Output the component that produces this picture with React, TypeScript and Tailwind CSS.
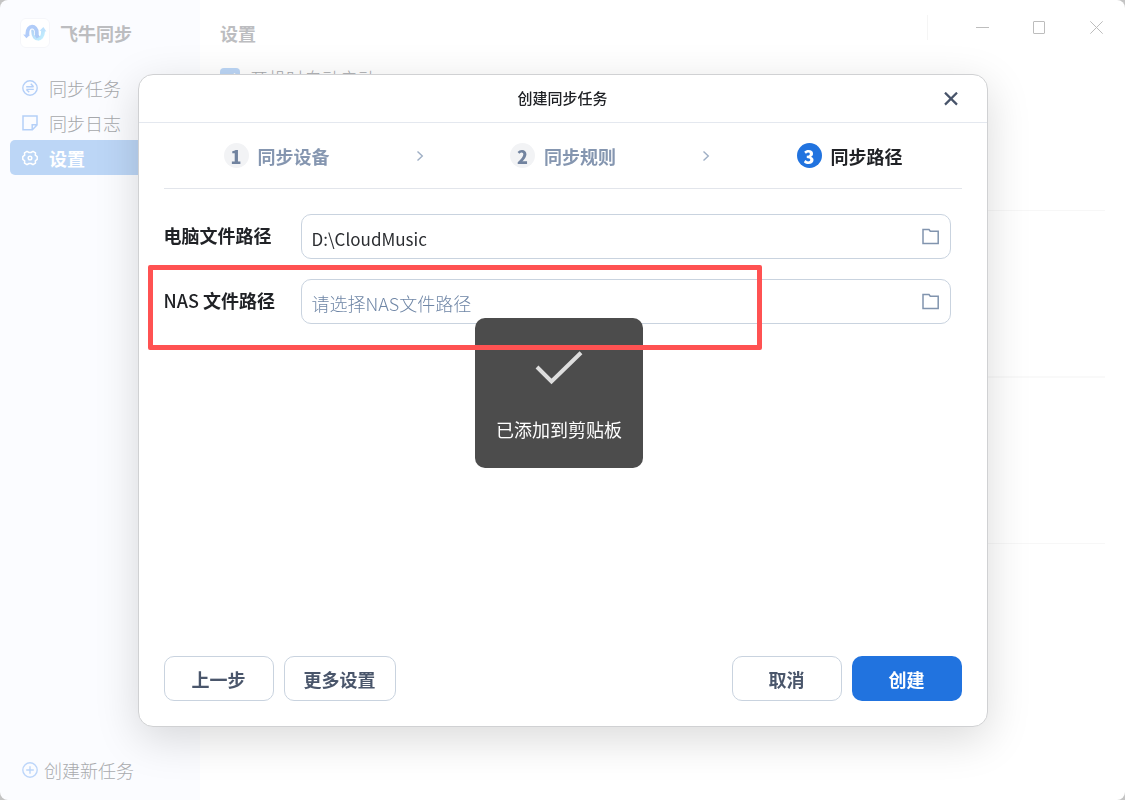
import React from "react";

interface NavItem {
  title: string;
  icon: React.ReactNode;
  active?: boolean;
}

interface Step {
  title: string;
  active?: boolean;
}

const Logo = () => (
  <svg className="h-[30px] w-[30px]" viewBox="0 0 30 30" fill="none">
    <defs>
      <linearGradient id="logo-arch" x1="4" y1="8" x2="19" y2="18" gradientUnits="userSpaceOnUse">
        <stop stopColor="#b3cdfb" />
        <stop offset="1" stopColor="#aecbf5" />
      </linearGradient>
      <linearGradient id="logo-bowl" x1="12" y1="12" x2="22" y2="22" gradientUnits="userSpaceOnUse">
        <stop stopColor="#b4d3f6" />
        <stop offset="1" stopColor="#c2f0ff" />
      </linearGradient>
    </defs>
    <rect x="0.5" y="0.5" width="29" height="29" rx="5.5" fill="#fff" stroke="#f5f6fa" />
    <path d="M13.2 11.5v2.3c0 9.2 9.6 9.2 9.8.2v-1.5" stroke="url(#logo-bowl)" strokeWidth="3.8" />
    <path d="M19.6 12.8 23.4 9l3 4.4z" fill="#bfe2fd" />
    <path d="M7.4 17v-1.4c0-9.2 9.4-8.8 9.4-1v2.6" stroke="#fff" strokeWidth="5.2" />
    <path d="M7.4 17v-1.4c0-9.2 9.4-8.8 9.4-1v2.6l1.4 2.4" stroke="url(#logo-arch)" strokeWidth="3.8" />
    <path d="m3.2 16.4 6.8.6-3.6 3.2z" fill="#b3cdfb" />
  </svg>
);

const TaskIcon = () => (
  <svg className="h-4 w-4" viewBox="0 0 16 16" fill="none" stroke="currentColor" strokeWidth="1.4">
    <circle cx="8" cy="8" r="7.2" />
    <path d="M4.2 6.7h7.4M8.8 3.8l2.8 2.9M11.8 9.4H4.4M7.2 12.3 4.4 9.4" />
  </svg>
);

const LogIcon = () => (
  <svg className="h-4 w-4" viewBox="0 0 16 16" fill="none" stroke="currentColor" strokeWidth="1.5">
    <path d="M1 1h14v9l-4.6 4.8H1zM15 9.8h-4.8v5" />
  </svg>
);

const GearIcon = () => (
  <svg className="h-4 w-4" viewBox="0 0 16 16" fill="none" stroke="currentColor" strokeWidth="1.5">
    <path
      d="M5 1.3l2 1.2h2l2-1.2 2.5 1.6-.2 2.3 1.9 1.4v2.8l-1.9 1.4.2 2.3-2.5 1.6-2-1.2H7l-2 1.2-2.5-1.6.2-2.3L.8 9.4V6.6l1.9-1.4-.2-2.3z"
      strokeLinejoin="round"
    />
    <circle cx="8" cy="8" r="1.8" />
  </svg>
);

const FolderIcon = () => (
  <svg className="h-[17px] w-[18px]" viewBox="0 0 18 17" fill="none" stroke="currentColor" strokeWidth="1.5">
    <path d="M1 1.5h6l1.3 1.8h7.9v12.2H1z" />
  </svg>
);

const Sidebar = () => {
  const items: NavItem[] = [
    { title: "同步任务", icon: <TaskIcon /> },
    { title: "同步日志", icon: <LogIcon /> },
    { title: "设置", icon: <GearIcon />, active: true },
  ];

  return (
    <aside className="flex w-[200px] shrink-0 flex-col bg-[#fbfcff]">
      <div className="flex h-[70px] items-center gap-[10px] px-5 pb-1 text-lg font-bold text-[#bcbdc0]">
        <Logo />
        <span>飞牛同步</span>
      </div>
      <nav className="px-[10px]">
        {items.map((item) => (
          <a
            key={item.title}
            href="#"
            className={
              item.active
                ? "flex h-[35px] items-center gap-[11px] rounded-[5px] bg-[#bcd6f6] px-3 text-lg font-bold text-white"
                : "flex h-[35px] items-center gap-[11px] rounded-[5px] px-3 text-lg font-light text-[#a6a8ab]"
            }
          >
            <span className={item.active ? "text-white" : "text-[#b5d0f8]"}>{item.icon}</span>
            {item.title}
          </a>
        ))}
      </nav>
      <button className="mt-auto mb-[13px] flex h-[35px] items-center gap-[6px] px-[22px] text-lg font-light text-[#a9abae]">
        <svg className="h-4 w-4 text-[#bdd6fa]" viewBox="0 0 16 16" fill="none" stroke="currentColor" strokeWidth="1.4">
          <circle cx="8" cy="8" r="7.2" />
          <path d="M8 4.2v7.6M4.2 8h7.6" />
        </svg>
        创建新任务
      </button>
    </aside>
  );
};

const WindowControls = () => (
  <div className="flex h-[55px] items-center text-[#bdbdbd]">
    <span className="mr-[26px] h-[25px] w-px bg-[#f5f5f5]" />
    <button aria-label="最小化" className="flex h-full w-[57px] items-center justify-center">
      <svg className="h-[13px] w-[13px]" viewBox="0 0 13 13" stroke="currentColor">
        <path d="M0 6.5h13" />
      </svg>
    </button>
    <button aria-label="最大化" className="flex h-full w-[57px] items-center justify-center">
      <svg className="h-[13px] w-[13px]" viewBox="0 0 13 13" fill="none" stroke="currentColor">
        <rect x="0.5" y="0.5" width="11" height="12" rx="0.5" />
      </svg>
    </button>
    <button aria-label="关闭" className="flex h-full w-[57px] items-center justify-center">
      <svg className="h-[13px] w-[13px]" viewBox="0 0 13 13" stroke="currentColor">
        <path d="M.3.3l12.4 12.4M12.7.3.3 12.7" />
      </svg>
    </button>
  </div>
);

const SettingsPage = () => (
  <main className="flex min-w-0 flex-1 flex-col bg-white">
    <header className="flex h-[67px] items-start justify-between">
      <h1 className="pt-[19px] pl-5 text-lg font-bold text-[#bcbdc0]">设置</h1>
      <WindowControls />
    </header>
    <div className="px-5">
      <section className="h-[144px] border-b border-[#f7f7f7]">
        <label className="flex items-center gap-[10px] pt-px text-lg leading-5 font-light text-[#a6a8ab]">
          <span className="relative flex">
            <input
              type="checkbox"
              defaultChecked
              className="h-5 w-5 appearance-none rounded-[4px] bg-[#bcd6f6]"
            />
            <svg
              className="pointer-events-none absolute inset-0 h-5 w-5"
              viewBox="0 0 20 20"
              fill="none"
              stroke="#fff"
              strokeWidth="1.8"
            >
              <path d="M5 10l3.5 3.5L15 5.5" />
            </svg>
          </span>
          开机时自动启动
        </label>
      </section>
      <section className="h-[167px] border-b-2 border-[#f9f9f9]" />
      <section className="h-[166px] border-b border-[#f7f7f7]" />
    </div>
  </main>
);

const Steps = () => {
  const steps: Step[] = [
    { title: "同步设备" },
    { title: "同步规则" },
    { title: "同步路径", active: true },
  ];

  return (
    <ol className="flex h-[66px] items-center justify-between border-b border-[#e2e5eb] pr-[59px] pl-15 text-lg font-bold">
      {steps.map((step, idx) => (
        <React.Fragment key={step.title}>
          {idx > 0 && (
            <li aria-hidden="true" className="text-[#9fafc5]">
              <svg className="h-3 w-2" viewBox="0 0 8 12" fill="none" stroke="currentColor" strokeWidth="1.4">
                <path d="M1.5 1.5 6.3 6 1.5 10.5" />
              </svg>
            </li>
          )}
          <li
            className={
              step.active
                ? "flex items-center gap-[9px] text-[#202226]"
                : "flex items-center gap-[9px] text-[#8596b0]"
            }
          >
            <span
              className={
                step.active
                  ? "flex h-[25px] w-[25px] items-center justify-center rounded-full bg-[#2173df] font-black text-white"
                  : "flex h-[25px] w-[25px] items-center justify-center rounded-full bg-[#f2f3f5] font-black text-[#71839f]"
              }
            >
              {idx + 1}
            </span>
            {step.title}
          </li>
        </React.Fragment>
      ))}
    </ol>
  );
};

const PathForm = () => (
  <div className="flex flex-col gap-5 pt-[25px] pr-[11px]">
    <div className="flex items-center">
      <label htmlFor="pc-path" className="w-[137px] shrink-0 pb-1 text-lg font-bold text-[#202226]">
        电脑文件路径
      </label>
      <div className="flex h-[45px] flex-1 items-center rounded-[10px] border border-[#c9d3df] px-[10px]">
        <input
          id="pc-path"
          defaultValue="D:\CloudMusic"
          className="h-full min-w-0 flex-1 pt-1 text-[17px] text-[#2b2d31] outline-none"
        />
        <button aria-label="选择电脑文件夹" className="text-[#8194ae]">
          <FolderIcon />
        </button>
      </div>
    </div>
    <div className="flex items-center">
      <label htmlFor="nas-path" className="w-[137px] shrink-0 pb-1 text-lg font-bold text-[#202226]">
        <span className="font-medium">NAS</span> 文件路径
      </label>
      <div className="flex h-[45px] flex-1 items-center rounded-[10px] border border-[#c9d3df] px-[10px]">
        <input
          id="nas-path"
          placeholder="请选择NAS文件路径"
          className="h-full min-w-0 flex-1 pt-[2px] text-lg font-light outline-none placeholder:text-[#6f86a6]"
        />
        <button aria-label="选择NAS文件夹" className="text-[#8194ae]">
          <FolderIcon />
        </button>
      </div>
    </div>
  </div>
);

const CreateTaskDialog = () => (
  <div className="fixed inset-0 flex justify-center px-4 pt-[74px] pb-[73px]">
    <div
      role="dialog"
      aria-labelledby="dialog-title"
      className="flex w-full max-w-[850px] flex-col rounded-[15px] border border-[#d0d1d3] bg-white shadow-[0_12px_44px_rgba(0,0,0,0.15)]"
    >
      <header className="relative flex h-12 shrink-0 items-center justify-center border-b border-[#e4e8ef]">
        <h2 id="dialog-title" className="text-[15px] font-medium text-[#202226]">
          创建同步任务
        </h2>
        <button aria-label="关闭" className="absolute right-[29px] text-[#48546a]">
          <svg className="h-[14px] w-[14px]" viewBox="0 0 14 14" stroke="currentColor" strokeWidth="2.2">
            <path d="M1 .6l12 12M13 .6l-12 12" />
          </svg>
        </button>
      </header>
      <div className="flex flex-1 flex-col px-[25px] pb-[25px]">
        <Steps />
        <PathForm />
        <footer className="mt-auto flex gap-[10px] text-lg font-bold text-[#4a566b]">
          <button className="h-[45px] w-[110px] rounded-[10px] border border-[#c9d3df]">上一步</button>
          <button className="h-[45px] w-[112px] rounded-[10px] border border-[#c9d3df]">更多设置</button>
          <button className="ml-auto h-[45px] w-[110px] rounded-[10px] border border-[#c9d3df]">取消</button>
          <button className="h-[45px] w-[110px] rounded-[10px] bg-[#2173df] text-white">创建</button>
        </footer>
      </div>
    </div>
  </div>
);

const Toast = () => (
  <div
    role="status"
    className="fixed top-[318px] left-[475px] flex h-[150px] w-[168px] flex-col items-center rounded-[10px] bg-[#4c4c4c] pt-[33px] text-lg text-white"
  >
    <svg className="h-[34px] w-12" viewBox="0 0 48 34" fill="none" stroke="#dedede" strokeWidth="4">
      <path d="M2 16 16.5 30.5 46 1.8" />
    </svg>
    <span className="mt-[30px]">已添加到剪贴板</span>
  </div>
);

const App = () => {
  return (
    <div
      lang="zh-CN"
      className="h-screen overflow-hidden bg-[#c4c4c4] font-['Noto_Sans_CJK_SC',sans-serif]"
    >
      <div className="flex h-full overflow-hidden rounded-[8px]">
        <Sidebar />
        <SettingsPage />
      </div>
      <CreateTaskDialog />
      <Toast />
      {/* highlight around the NAS path row */}
      <div className="pointer-events-none fixed top-[265px] left-[148px] h-[85px] w-[614px] rounded-[2px] border-5 border-[#ff5252]" />
    </div>
  );
};

export default App;
